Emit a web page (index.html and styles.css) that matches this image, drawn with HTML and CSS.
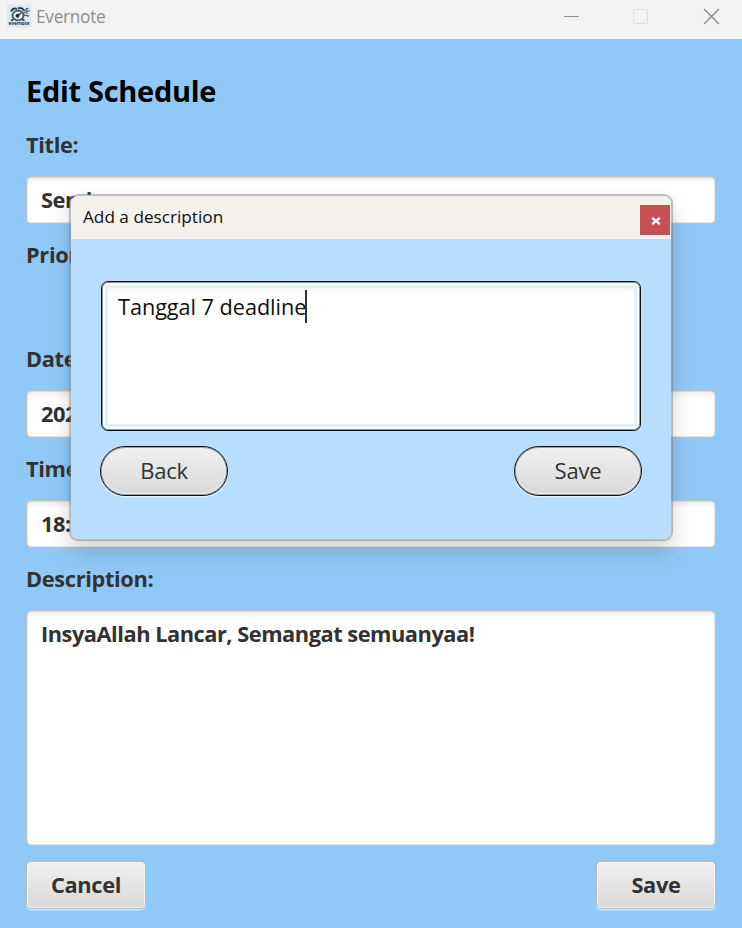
FILE: index.html
```html
<!DOCTYPE html>
<html lang="en">
<head>
<meta charset="utf-8">
<title>Evernote</title>
<link rel="stylesheet" href="styles.css">
</head>
<body>
<header class="titlebar">
  <svg class="logo" width="24" height="24" viewBox="0 0 24 24">
    <rect width="24" height="24" fill="#d8edf8"/>
    <path d="M16.500 7.500l5-3.500M17 9l6-2.500M17 11l5 1M19.500 4l.5 6" stroke="#5f6b73" stroke-width="1.300" fill="none"/>
    <ellipse cx="11" cy="11.500" rx="5.500" ry="4.800" fill="#e6f0f5" stroke="#4a545b" stroke-width="1.800"/>
    <path d="M4 7.500q2-4 6-2.500M11 4.500q4-1.500 6 2" stroke="#353e44" stroke-width="2" fill="none"/>
    <path d="M11 11.500l3-2.500M6.500 15.500l-2.500 1M15 15.500l2.500 1" stroke="#30383d" stroke-width="1.500" fill="none"/>
    <circle cx="10.500" cy="11.800" r="2" fill="#2b3237"/>
    <text class="logo-text" x="1.500" y="21" textLength="21" lengthAdjust="spacingAndGlyphs">evernote</text>
  </svg>
  <span class="app-name">Evernote</span>
  <svg class="controls" width="160" height="20" viewBox="0 0 160 20" fill="none">
    <path d="M4 9.500h15" stroke="#8c8c8c"/>
    <rect x="73.500" y="2.500" width="14" height="14" rx="1" stroke="#dedede"/>
    <path d="M144 2l15 15M159 2l-15 15" stroke="#858585" stroke-width="1.300"/>
  </svg>
</header>
<main class="form">
  <h1 class="heading">Edit Schedule</h1>
  <label class="label">Title:</label>
  <div class="field">Seminar</div>
  <label class="label l-priority">Priority:</label>
  <label class="label">Date:</label>
  <div class="field">2023-12-07</div>
  <label class="label">Time:</label>
  <div class="field">18:00</div>
  <label class="label">Description:</label>
  <div class="field area">InsyaAllah Lancar, Semangat semuanyaa!</div>
  <div class="actions">
    <button class="btn">Cancel</button>
    <button class="btn">Save</button>
  </div>
</main>
<section class="dialog">
  <div class="dialog-head">
    <span class="dialog-title">Add a description</span>
    <button class="close"><svg width="10" height="8" viewBox="0 0 10 8"><path d="M1.200 .8l7.600 6.400M8.800 .8L1.200 7.200" stroke="#fff" stroke-width="2.200"/></svg></button>
  </div>
  <div class="dialog-body">
    <div class="editor"><div class="editor-inner"><span class="editor-text">Tanggal 7 deadline</span><i class="caret"></i></div></div>
    <div class="dialog-actions">
      <button class="pill">Back</button>
      <button class="pill">Save</button>
    </div>
  </div>
</section>
</body>
</html>
```

FILE: styles.css
```css
* { box-sizing: border-box; }
body {
  margin: 0;
  width: 742px;
  height: 928px;
  overflow: hidden;
  position: relative;
  background: #90c9f8;
  color: #323232;
  font-family: "Open Sans", "Noto Sans", sans-serif;
}
button { font-family: inherit; color: inherit; padding: 0; }
.titlebar {
  height: 39px;
  background: #f3f3f3;
  display: flex;
  align-items: flex-start;
  padding: 4px 22px 0 7px;
}
.logo { overflow: visible; }
.logo-text { font: bold 5.5px "Open Sans", sans-serif; fill: #1f272c; }
.app-name {
  margin-left: 5px;
  font-size: 17.3px;
  line-height: 26px;
  letter-spacing: -0.3px;
  color: #8d8d8d;
}
.controls { margin: 3px 0 0 auto; }
.form {
  display: flex;
  flex-direction: column;
  padding: 31px 26px 0;
}
.heading {
  margin: 0 0 19px;
  height: 41px;
  line-height: 41px;
  font-size: 29px;
  letter-spacing: -0.3px;
  font-weight: 700;
  color: #000;
}
.label {
  height: 30px;
  line-height: 30px;
  font-size: 21.8px;
  letter-spacing: -0.35px;
  font-weight: 700;
  margin-bottom: 16px;
}
.l-priority { margin-bottom: 74px; }
.field {
  height: 48px;
  margin-bottom: 16px;
  padding: 0 14px;
  line-height: 46px;
  font-size: 21.8px;
  letter-spacing: -0.48px;
  font-weight: 700;
  white-space: nowrap;
  background: linear-gradient(#ececec, #fff 7px) padding-box;
  border: 1px solid #bfc3c6;
  box-shadow: inset 0 0 0 1px rgba(190, 190, 190, .4);
  border-radius: 5px;
  width: 690px;
}
.area { height: 236px; margin-bottom: 15px; }
.actions { display: flex; justify-content: space-between; }
.btn {
  width: 120px;
  height: 48px;
  font-size: 21.8px;
  letter-spacing: -0.35px;
  font-weight: 700;
  line-height: 44px;
  background: linear-gradient(#f0f0f0, #d9d9d9);
  border: 1.5px solid #b7b8b9;
  border-radius: 5px;
  box-shadow: inset 0 0 0 1px #f5f5f5, 0 1.5px 0 #d2e9fc;
}
.dialog {
  position: absolute;
  left: 69px;
  top: 194px;
  width: 604px;
  height: 347px;
  border: 2px solid rgba(125, 130, 135, .5);
  border-radius: 9px;
  background: #b7deff;
  background-clip: padding-box;
  box-shadow: 0 12px 22px rgba(0, 0, 0, .15), 0 1px 7px rgba(0, 0, 0, .04);
}
.dialog-head {
  display: flex;
  justify-content: space-between;
  height: 43px;
  padding: 9px 1px 0 12px;
  background: #f5f2ee;
  border-radius: 7px 7px 0 0;
  color: #101010;
}
.dialog-title { font-size: 17.2px; line-height: 25px; margin-top: -1px; }
.close {
  width: 30px;
  height: 30px;
  border: 0;
  background: #c75052;
  display: flex;
  align-items: center;
  justify-content: center;
}
.close svg { margin: 1px 0 0 1px; }
.dialog-body { padding: 42px 30px 0; }
.editor {
  height: 150px;
  width: 540px;
  border: 1.5px solid #101416;
  border-radius: 7px;
  background: #fff;
  box-shadow: inset 0 0 0 1px #8b9093;
  padding: 3px;
}
.editor-inner {
  height: 100%;
  border: 3px solid #e0f1f7;
  background: linear-gradient(#f4f4f4, #fff 5px) padding-box;
  display: flex;
  align-items: flex-start;
  padding: 0 10px;
  font-size: 21.7px;
  letter-spacing: -0.05px;
  line-height: 37px;
  color: #101010;
}
.caret { width: 2px; height: 33px; margin: 2px 0 0 -1px; background: #303030; }
.dialog-actions {
  display: flex;
  justify-content: space-between;
  margin: 15px -1px 0;
}
.pill {
  width: 128px;
  height: 50px;
  border: 1.5px solid #101010;
  border-radius: 25px;
  background: linear-gradient(#f1f1f1, #d8d8d8);
  box-shadow: inset 0 0 0 1px #a0a0a0, inset 0 0 0 2px #f1f1f1, 0 1.5px 0 #e0f1ff;
  font-size: 22px;
  line-height: 44px;
  padding-bottom: 2px;
  letter-spacing: -0.2px;
}
```
